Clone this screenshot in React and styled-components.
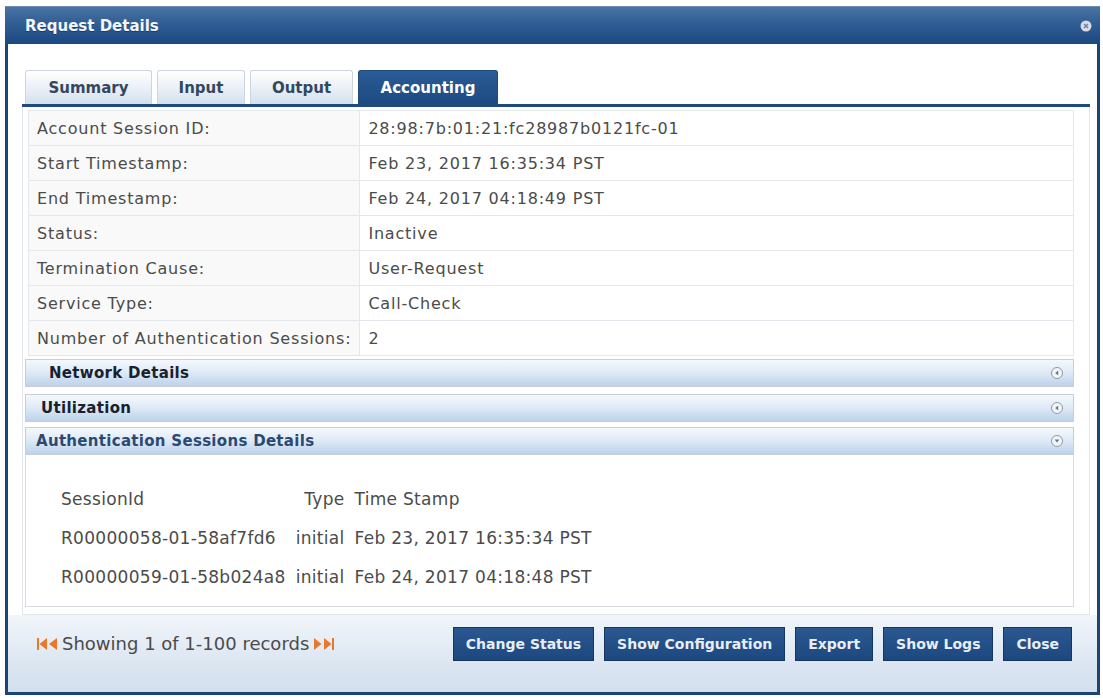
import React from "react";
import styled, { createGlobalStyle } from "styled-components";

const GlobalStyle = createGlobalStyle`
  body {
    margin: 0;
    background: #ffffff;
    font-family: "DejaVu Sans", Verdana, sans-serif;
  }
`;

const accountRows = [
  ["Account Session ID:", "28:98:7b:01:21:fc28987b0121fc-01"],
  ["Start Timestamp:", "Feb 23, 2017 16:35:34 PST"],
  ["End Timestamp:", "Feb 24, 2017 04:18:49 PST"],
  ["Status:", "Inactive"],
  ["Termination Cause:", "User-Request"],
  ["Service Type:", "Call-Check"],
  ["Number of Authentication Sessions:", "2"],
];

const sessions = [
  ["R00000058-01-58af7fd6", "initial", "Feb 23, 2017 16:35:34 PST"],
  ["R00000059-01-58b024a8", "initial", "Feb 24, 2017 04:18:48 PST"],
];

const tabs = [
  { label: "Summary", width: 127 },
  { label: "Input", width: 88 },
  { label: "Output", width: 103 },
  { label: "Accounting", width: 140, active: true },
];

const buttons = ["Change Status", "Show Configuration", "Export", "Show Logs", "Close"];

const CloseIcon = () => (
  <svg width="12" height="12" viewBox="0 0 12 12">
    <circle cx="6" cy="6" r="5.5" fill="#d6dce5" />
    <path d="M4 4l4 4M8 4l-4 4" stroke="#6f7e92" strokeWidth="1.4" />
  </svg>
);

const ToggleIcon = ({ open }) => (
  <svg width="14" height="14" viewBox="0 0 14 14">
    <circle cx="7" cy="7" r="5.5" fill="#f3f6f9" stroke="#8e99a6" strokeWidth="1" />
    {open ? (
      <path d="M4.6 5.6h4.8L7 8.6z" fill="#6b7683" />
    ) : (
      <path d="M8.2 4.6v4.8L5.2 7z" fill="#6b7683" />
    )}
  </svg>
);

// orange pager arrows, with an end bar for first / last
const PageArrow = ({ dir, bar }) => (
  <svg width={bar ? 10 : 8} height="14" viewBox={bar ? "0 0 10 14" : "0 0 8 14"}>
    {dir === "left" ? (
      <>
        {bar && <rect x="0" y="1" width="2" height="12" fill="#e7782d" />}
        <path d={bar ? "M10 1v12L2.5 7z" : "M8 1v12L0 7z"} fill="#e7782d" />
      </>
    ) : (
      <>
        <path d="M0 1v12l7.5-6z" fill="#e7782d" />
        {bar && <rect x="8" y="1" width="2" height="12" fill="#e7782d" />}
      </>
    )}
  </svg>
);

const App = () => {
  return (
    <>
      <GlobalStyle />
      <Dialog>
        <TitleBar>
          <Title>Request Details</Title>
          <CloseIcon />
        </TitleBar>
        <Body>
          <TabRow>
            {tabs.map((t) => (
              <Tab key={t.label} $w={t.width} $active={t.active}>
                {t.label}
              </Tab>
            ))}
          </TabRow>
          <Content>
            <InfoTable>
              <tbody>
                {accountRows.map(([label, value]) => (
                  <tr key={label}>
                    <LabelCell>{label}</LabelCell>
                    <ValueCell>{value}</ValueCell>
                  </tr>
                ))}
              </tbody>
            </InfoTable>

            <SectionHead $gap={3} $indent={23}>
              <span>Network Details</span>
              <ToggleIcon />
            </SectionHead>
            <SectionHead $gap={7} $indent={15}>
              <span>Utilization</span>
              <ToggleIcon />
            </SectionHead>
            <SectionHead $gap={5} $indent={10} $open>
              <span>Authentication Sessions Details</span>
              <ToggleIcon open />
            </SectionHead>
            <SectionPanel>
              <SessionTable>
                <thead>
                  <tr>
                    <SessionCell>SessionId</SessionCell>
                    <SessionCell $right>Type</SessionCell>
                    <SessionCell>Time Stamp</SessionCell>
                  </tr>
                </thead>
                <tbody>
                  {sessions.map(([id, type, ts]) => (
                    <tr key={id}>
                      <SessionCell>{id}</SessionCell>
                      <SessionCell $right>{type}</SessionCell>
                      <SessionCell>{ts}</SessionCell>
                    </tr>
                  ))}
                </tbody>
              </SessionTable>
            </SectionPanel>
          </Content>
        </Body>
        <Footer>
          <Pager>
            <PageArrow dir="left" bar />
            <PageArrow dir="left" />
            <PagerText>Showing 1 of 1-100 records</PagerText>
            <PageArrow dir="right" />
            <PageArrow dir="right" bar />
          </Pager>
          <ButtonBar>
            {buttons.map((b) => (
              <ActionButton key={b}>{b}</ActionButton>
            ))}
          </ButtonBar>
        </Footer>
      </Dialog>
    </>
  );
};

export default App;

const Dialog = styled.div`
  margin: 6px 0 0 5px;
  width: 1095px;
  height: 689px;
  box-sizing: border-box;
  border: 3px solid #1c4475;
  border-top: none;
  display: flex;
  flex-direction: column;
  background: #ffffff;
`;

const TitleBar = styled.div`
  flex: none;
  height: 38px;
  box-sizing: border-box;
  display: flex;
  align-items: center;
  justify-content: space-between;
  padding: 0 8px 0 20px;
  margin: 0 -3px;
  border-top: 1px solid #6b8bb5;
  background: linear-gradient(#4b72a3, #305d94 45%, #1a4880);
`;

const Title = styled.span`
  color: #f3f6fb;
  font-size: 15px;
  font-weight: bold;
  text-shadow: 0 1px 0 rgba(0, 0, 0, 0.3);
`;

const Body = styled.div`
  flex: 1;
  display: flex;
  flex-direction: column;
  padding: 26px 7px 0 14px;
`;

const TabRow = styled.div`
  display: flex;
  gap: 5px;
  padding-left: 3px;
  border-bottom: 3px solid #1e4a7f;
`;

const Tab = styled.div`
  width: ${(p) => p.$w}px;
  height: 34px;
  box-sizing: border-box;
  display: flex;
  align-items: center;
  justify-content: center;
  border: 1px solid ${(p) => (p.$active ? "#1e4a7f" : "#cbd4df")};
  border-bottom: none;
  border-radius: 3px 3px 0 0;
  background: ${(p) =>
    p.$active
      ? "linear-gradient(#2b5b95, #1d4a82)"
      : "linear-gradient(#ffffff, #edf2f8 45%, #d4e0ed)"};
  color: ${(p) => (p.$active ? "#ffffff" : "#34475e")};
  font-size: 15px;
  font-weight: bold;
`;

const Content = styled.div`
  flex: 1;
  display: flex;
  flex-direction: column;
  padding: 3px 15px 7px 2px;
  border: 1px solid #e2e6eb;
  border-top: none;
`;

const InfoTable = styled.table`
  width: calc(100% - 3px);
  margin-left: 3px;
  border-collapse: collapse;
  font-size: 16px;
  letter-spacing: 0.8px;
  color: #4b4b4b;
`;

const LabelCell = styled.td`
  width: 314px;
  height: 34px;
  padding: 0 8px;
  border: 1px solid #e4e7eb;
  background: #f9f9f9;
  white-space: nowrap;
`;

const ValueCell = styled.td`
  height: 34px;
  padding: 0 8px;
  border: 1px solid #e4e7eb;
  background: #ffffff;
`;

const SectionHead = styled.div`
  height: 28px;
  margin-top: ${(p) => p.$gap}px;
  box-sizing: border-box;
  display: flex;
  align-items: center;
  justify-content: space-between;
  padding: 0 9px 0 ${(p) => p.$indent}px;
  border: 1px solid #c7ced7;
  background: linear-gradient(#f4f8fc, #e0ebf7 45%, #bdd2ea);
  color: ${(p) => (p.$open ? "#2a4a73" : "#18222e")};
  font-size: 15px;
  letter-spacing: 0.3px;
  font-weight: bold;
`;

const SectionPanel = styled.div`
  flex: 1;
  border: 1px solid #d8dce1;
  border-top: none;
  padding: 24px 0 0 30px;
`;

const SessionTable = styled.table`
  border-collapse: collapse;
  font-size: 17px;
  letter-spacing: 0.3px;
  color: #4b4b4b;
`;

const SessionCell = styled.td`
  height: 39px;
  padding: 0 5px;
  text-align: ${(p) => (p.$right ? "right" : "left")};
  white-space: nowrap;
`;

const Footer = styled.div`
  flex: none;
  height: 77px;
  box-sizing: border-box;
  display: flex;
  align-items: flex-start;
  justify-content: space-between;
  padding: 12px 25px 0 29px;
  background: linear-gradient(#f1f5fa, #dde7f2 60%, #d2dfee);
`;

const Pager = styled.div`
  display: flex;
  align-items: center;
  gap: 2px;
  height: 33px;
`;

const PagerText = styled.span`
  font-size: 18px;
  color: #4b4b4b;
  margin: 0 3px;
`;

const ButtonBar = styled.div`
  display: flex;
  gap: 10px;
`;

const ActionButton = styled.div`
  height: 34px;
  box-sizing: border-box;
  display: flex;
  align-items: center;
  padding: 0 12px;
  border: 1px solid #15375f;
  background: linear-gradient(#2a5891, #1d487f);
  color: #e9eef5;
  font-size: 14px;
  font-weight: bold;
  cursor: pointer;
`;
